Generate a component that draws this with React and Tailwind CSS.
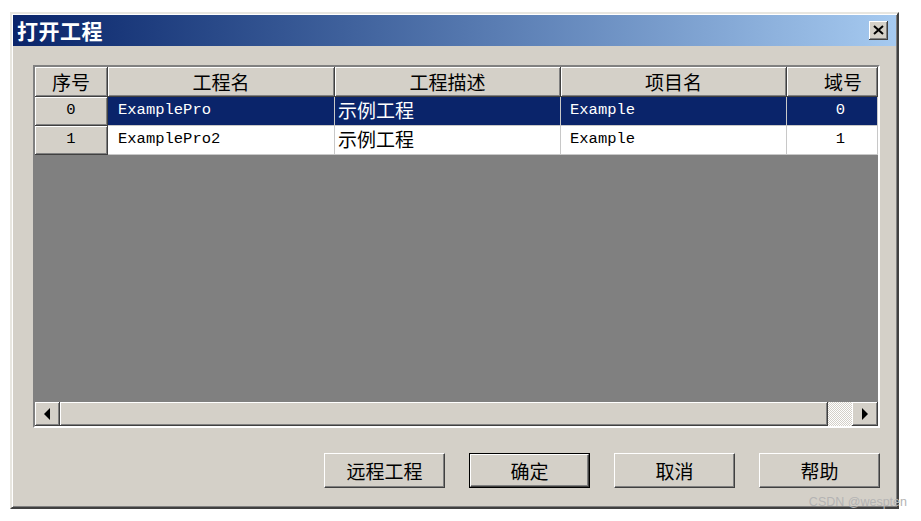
import React from 'react';

const rows = [
  { id: '0', name: 'ExamplePro', desc: '示例工程', proj: 'Example', domain: '0', selected: true },
  { id: '1', name: 'ExamplePro2', desc: '示例工程', proj: 'Example', domain: '1', selected: false },
];

const raised = 'bg-[#d4d0c8] border-r border-b border-r-[#404040] border-b-[#404040] shadow-[inset_1px_1px_#ffffff,inset_-1px_-1px_#808080]';

const Button = ({ children, isDefault }) => (
  <div className={isDefault ? 'border border-black' : ''}>
    <button
      className={`${isDefault ? 'w-[119px] h-[33px]' : 'w-[121px] h-[35px]'} bg-[#d4d0c8] border-t border-l border-t-white border-l-white border-r border-b border-r-[#404040] border-b-[#404040] shadow-[inset_-1px_-1px_#808080] text-[19px] leading-none text-black flex items-center justify-center`}
    >
      {children}
    </button>
  </div>
);

const Arrow = ({ dir }) => (
  <svg width="8" height="12" viewBox="0 0 8 12">
    {dir === 'left' ? <polygon points="7,0 7,12 1,6" fill="#000" /> : <polygon points="1,0 1,12 7,6" fill="#000" />}
  </svg>
);

export default function App() {
  return (
    <div className="w-[921px] h-[521px] bg-white relative pt-[12px] pl-[10px] font-['Noto_Sans_CJK_SC',sans-serif]">
      {/* Dialog */}
      <div className="w-[889px] h-[497px] bg-[#d4d0c8] border-2 border-t-[#e8e6e0] border-l-[#e8e6e0] border-r-[#404040] border-b-[#404040] shadow-[inset_1px_1px_#ffffff,inset_-1px_-1px_#808080] flex flex-col">
        {/* Title bar */}
        <div className="h-[31px] mx-[1px] mt-[1px] bg-gradient-to-r from-[#0a246a] to-[#a6caf0] flex items-center justify-between pl-[4px] pr-[8px]">
          <span className="text-white font-bold text-[21px] leading-none tracking-[0.5px]">打开工程</span>
          <div className="w-[19px] h-[19px] bg-[#d4d0c8] border-r border-b border-r-[#404040] border-b-[#404040] shadow-[inset_1px_1px_#ffffff,inset_-1px_-1px_#808080] flex items-center justify-center">
            <svg width="11" height="10" viewBox="0 0 11 10">
              <path d="M1 1 L10 9 M10 1 L1 9" stroke="#000" strokeWidth="2" />
            </svg>
          </div>
        </div>

        {/* Table */}
        <div className="mt-[19px] ml-[21px] w-[847px] h-[363px] border-2 border-t-[#808080] border-l-[#808080] border-r-white border-b-white flex flex-col">
          <div className="grid grid-cols-[73px_227px_226px_226px_91px] h-[30px]">
            {['序号', '工程名', '工程描述', '项目名'].map((h) => (
              <div key={h} className={`${raised} flex items-center justify-center text-[19px] text-black leading-none`}>
                {h}
              </div>
            ))}
            <div className={`${raised} flex items-center justify-end pr-[15px] text-[19px] text-black leading-none`}>域号</div>
          </div>

          {rows.map((r) => {
            const cell = r.selected
              ? 'bg-[#0a246a] text-white border-r border-r-[#c8c8c8] border-b border-b-[#c8c8c8]'
              : 'bg-white text-black border-r border-r-[#c8c8c8] border-b border-b-[#c8c8c8]';
            const mono = "font-['Liberation_Mono',monospace] text-[15.5px] leading-none";
            return (
              <div key={r.id} className="grid grid-cols-[73px_227px_226px_226px_91px] h-[29px]">
                <div className={`${raised} flex items-center justify-center text-black ${mono}`}>{r.id}</div>
                <div className={`${cell} flex items-center pl-[10px] ${mono}`}>{r.name}</div>
                <div className={`${cell} flex items-center pl-[3px] pb-[3px] text-[19px] leading-none`}>{r.desc}</div>
                <div className={`${cell} flex items-center pl-[9px] ${mono}`}>{r.proj}</div>
                <div className={`${cell} flex items-center justify-end pr-[32px] ${mono}`}>{r.domain}</div>
              </div>
            );
          })}

          <div className="flex-1 bg-[#808080]" />

          {/* Horizontal scrollbar */}
          <div className="h-[24px] flex bg-[#d4d0c8]">
            <div className={`w-[25px] ${raised} flex items-center justify-center`}>
              <Arrow dir="left" />
            </div>
            <div className={`flex-1 ${raised}`} />
            <div className="w-[24px] bg-[repeating-conic-gradient(#ffffff_0_25%,#d4d0c8_0_50%)] bg-size-[2px_2px]" />
            <div className={`w-[26px] ${raised} flex items-center justify-center`}>
              <Arrow dir="right" />
            </div>
          </div>
        </div>

        {/* Buttons */}
        <div className="mt-[25px] pr-[17px] flex justify-end gap-[24px]">
          <Button>远程工程</Button>
          <Button isDefault>确定</Button>
          <Button>取消</Button>
          <Button>帮助</Button>
        </div>
      </div>

      <div className="absolute right-[14px] bottom-[9px] text-[12.5px] text-[#b4b4b4] font-['Liberation_Sans',sans-serif]">
        CSDN @wespten
      </div>
    </div>
  );
}
